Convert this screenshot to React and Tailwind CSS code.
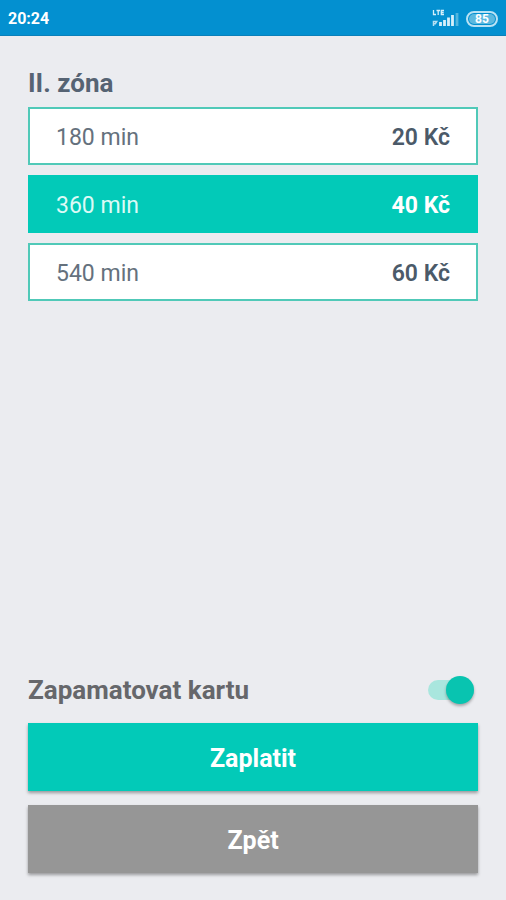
import { useState } from 'react';

const tickets = [
  { id: 't180', duration: '180 min', price: '20 Kč' },
  { id: 't360', duration: '360 min', price: '40 Kč' },
  { id: 't540', duration: '540 min', price: '60 Kč' },
];

function SignalIcon() {
  return (
    <svg width="28" height="20" viewBox="0 0 28 20" fill="none" aria-hidden="true">
      {/* LTE mark */}
      <path d="M1.5 1v4.5h2.5M4.5 1.5h3.5M6.2 1.5v4.5M12 1.5H9.3v4H12M9.3 3.5h2.4" stroke="#d5effa" strokeWidth="1.3" />
      <path d="M1.5 17v-4.5h3.2l-1.4 2.2H2" stroke="#b5e0f3" strokeWidth="1.5" />
      <path d="M8.5 17v-4M12.5 17v-6M16.5 17V8.5M20.5 17V6" stroke="#d5effa" strokeWidth="2.8" />
      <path d="M25 17V4" stroke="#52b5de" strokeWidth="2.8" />
    </svg>
  );
}

function StatusBar() {
  return (
    <header className="flex h-9 items-center justify-between border-b border-[#0a80ba] bg-[#0390d0] px-2 pt-0.5 text-white">
      <span className="text-base font-bold">20:24</span>
      <div className="flex items-center gap-1.5">
        <SignalIcon />
        <span className="flex h-4 w-8 items-center rounded-full border-2 border-[#b9e2f4] p-px">
          <span className="flex h-full w-full items-center justify-center rounded-full bg-[#5cb9df] text-xs leading-3 font-bold">
            85
          </span>
        </span>
      </div>
    </header>
  );
}

function TicketOption({ ticket, selected, onSelect }) {
  return (
    <label
      htmlFor={ticket.id}
      className={`flex h-[58px] cursor-pointer items-center justify-between border-2 px-[26px] pt-1 text-[23px] ${
        selected ? 'border-[#02cab8] bg-[#02cab8] text-white' : 'border-[#50c9b8] bg-white text-[#4b5a69]'
      }`}
    >
      <input
        id={ticket.id}
        type="radio"
        name="ticket"
        className="sr-only"
        checked={selected}
        onChange={() => onSelect(ticket.id)}
      />
      <span className={selected ? 'text-[#dcfaf6]' : 'text-[#65717d]'}>{ticket.duration}</span>
      <span className={selected ? 'font-bold' : 'font-semibold'}>{ticket.price}</span>
    </label>
  );
}

export default function App() {
  const [selected, setSelected] = useState('t360');
  const [remember, setRemember] = useState(true);

  return (
    <div className="flex min-h-screen flex-col bg-[#ebecf0] font-['Roboto','Noto_Sans',sans-serif]">
      <StatusBar />
      <main className="flex grow flex-col px-7 pt-8 pb-[27px]">
        <fieldset>
          <legend className="mb-[9px] text-[26px] leading-[30px] font-bold text-[#566373]">II. zóna</legend>
          <div className="flex flex-col gap-[10px]">
            {tickets.map((ticket) => (
              <TicketOption
                key={ticket.id}
                ticket={ticket}
                selected={ticket.id === selected}
                onSelect={setSelected}
              />
            ))}
          </div>
        </fieldset>

        <div className="mt-auto flex items-center justify-between pr-1 pb-[17px]">
          <label htmlFor="remember" className="text-[26px] leading-8 font-bold text-[#66676b]">
            Zapamatovat kartu
          </label>
          <input
            id="remember"
            type="checkbox"
            role="switch"
            checked={remember}
            onChange={(e) => setRemember(e.target.checked)}
            className="flex h-5 w-[46px] cursor-pointer appearance-none items-center rounded-full bg-[#c4c6ca] before:size-7 before:shrink-0 before:rounded-full before:bg-white before:shadow-[0_2px_3px_rgba(0,0,0,0.3)] checked:justify-end checked:bg-[#a9e6de] checked:before:bg-[#08c4b0]"
          />
        </div>
        <div className="flex flex-col gap-[14px]">
          <button
            type="button"
            className="h-[68px] bg-[#02cab8] pt-1 text-[25px] font-bold text-white shadow-[0_2px_3px_rgba(0,0,0,0.35)]"
          >
            Zaplatit
          </button>
          <button
            type="button"
            className="h-[68px] bg-[#969696] pt-1 text-[25px] font-bold text-white shadow-[0_2px_3px_rgba(0,0,0,0.35)]"
          >
            Zpět
          </button>
        </div>
      </main>
    </div>
  );
}
